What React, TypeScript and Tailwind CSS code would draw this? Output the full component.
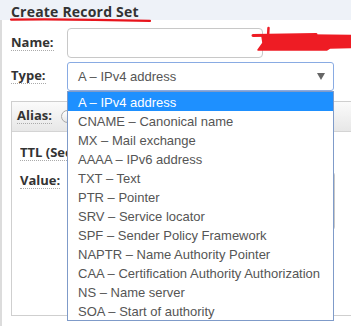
import React from "react";

const items = [
  "A – IPv4 address",
  "CNAME – Canonical name",
  "MX – Mail exchange",
  "AAAA – IPv6 address",
  "TXT – Text",
  "PTR – Pointer",
  "SRV – Service locator",
  "SPF – Sender Policy Framework",
  "NAPTR – Name Authority Pointer",
  "CAA – Certification Authority Authorization",
  "NS – Name server",
  "SOA – Start of authority",
];

const labelCls =
  "font-['Open_Sans',sans-serif] font-bold text-[13px] leading-[13px] text-[#333] border-b border-dotted border-[#aaa] pb-[1px] whitespace-nowrap";

export default function App() {
  return (
    <div className="relative w-[351px] h-[326px] overflow-hidden bg-white font-['Liberation_Sans',Arial,sans-serif]">
      {/* header */}
      <div className="h-[20px] bg-[#eef2f8] pl-[11px]">
        <span className="font-['Open_Sans',sans-serif] font-bold text-[14px] tracking-[0.2px] leading-[20px] text-[#333]">
          Create Record Set
        </span>
      </div>

      {/* body */}
      <div className="border-l-2 border-[#dcdcdc] h-[306px] pt-[8px]">
        {/* Name row */}
        <div className="flex items-center h-[30px]">
          <div className="w-[65px] pl-[9px] pt-[1px] flex">
            <span className={labelCls}>Name:</span>
          </div>
          <div className="w-[196px] h-[30px] border border-[#c8c8c8] rounded-[4px] bg-white" />
        </div>

        {/* Type row */}
        <div className="flex items-center h-[29px] mt-[4px]">
          <div className="w-[65px] pl-[9px] flex">
            <span className={labelCls}>Type:</span>
          </div>
          <div className="w-[267px] h-[29px] border border-[#89abe3] rounded-[3px] bg-white flex items-center justify-between pl-[10px] pr-[8px]">
            <span className="text-[13px] text-[#555]">A – IPv4 address</span>
            <svg width="8" height="7" viewBox="0 0 8 7">
              <path d="M0 0 L8 0 L4 7 Z" fill="#666" />
            </svg>
          </div>
        </div>

        {/* Panel */}
        <div className="ml-[9px] mt-[10px] w-[345px] border border-r-0 border-[#cfcfcf]">
          <div className="h-[30px] bg-gradient-to-b from-[#fbfbfb] to-[#e7e7e7] border-b border-[#d4d4d4] flex items-center pl-[5px]">
            <span className={labelCls}>Alias:</span>
            <span className="ml-[9px] w-[13px] h-[13px] rounded-full border border-[#a9a9a9] bg-gradient-to-b from-white to-[#e6e6e6]" />
          </div>
          <div className="h-[183px] pl-[8px]">
            <div className="pt-[14px] w-[47px] overflow-hidden flex">
              <span className={labelCls}>TTL (Seconds):</span>
            </div>
            <div className="flex mt-[11px]">
              <div className="w-[80px] pt-[2px] flex items-start">
                <span className={labelCls}>Value:</span>
              </div>
              <div className="w-[235px] h-[58px] border border-[#c8c8c8] rounded-[3px]" />
            </div>
          </div>
        </div>
      </div>

      {/* red underline on title */}
      <svg
        className="absolute left-0 top-0 pointer-events-none"
        width="160"
        height="26"
        viewBox="0 0 160 26"
      >
        <path
          d="M11 19.6 C 40 19.2, 70 19.4, 95 19.8 C 110 20.2, 130 20.6, 150 20.9"
          stroke="#e8141c"
          strokeWidth="2.2"
          fill="none"
          strokeLinecap="round"
        />
      </svg>

      {/* red scribble */}
      <svg
        className="absolute left-[250px] top-[24px] pointer-events-none"
        width="101"
        height="32"
        viewBox="0 0 101 32"
      >
        <g fill="#ee1c24" stroke="#ee1c24" strokeLinecap="round" strokeLinejoin="round">
          <path d="M12 12.5 L60 11 L101 11.5 L101 23.5 L80 24 L77 26 L8 26 L13 19 Z" strokeWidth="1.5" />
          <path d="M3 11.5 L66 10.5" strokeWidth="3" fill="none" />
          <path d="M18.5 4 L18 13" strokeWidth="2.5" fill="none" />
        </g>
      </svg>

      {/* dropdown list */}
      <div className="absolute left-[67px] top-[91px] w-[267px] border border-[#7f9bc9] bg-white">
        {items.map((t, i) => (
          <div
            key={t}
            className={
              i === 0
                ? "h-[19px] leading-[19px] pl-[10px] pt-[1px] text-[13px] bg-[#1e90ff] text-white whitespace-nowrap"
                : "h-[19px] leading-[19px] pl-[10px] pt-[1px] text-[13px] text-[#555] whitespace-nowrap"
            }
          >
            {t}
          </div>
        ))}
      </div>
    </div>
  );
}
